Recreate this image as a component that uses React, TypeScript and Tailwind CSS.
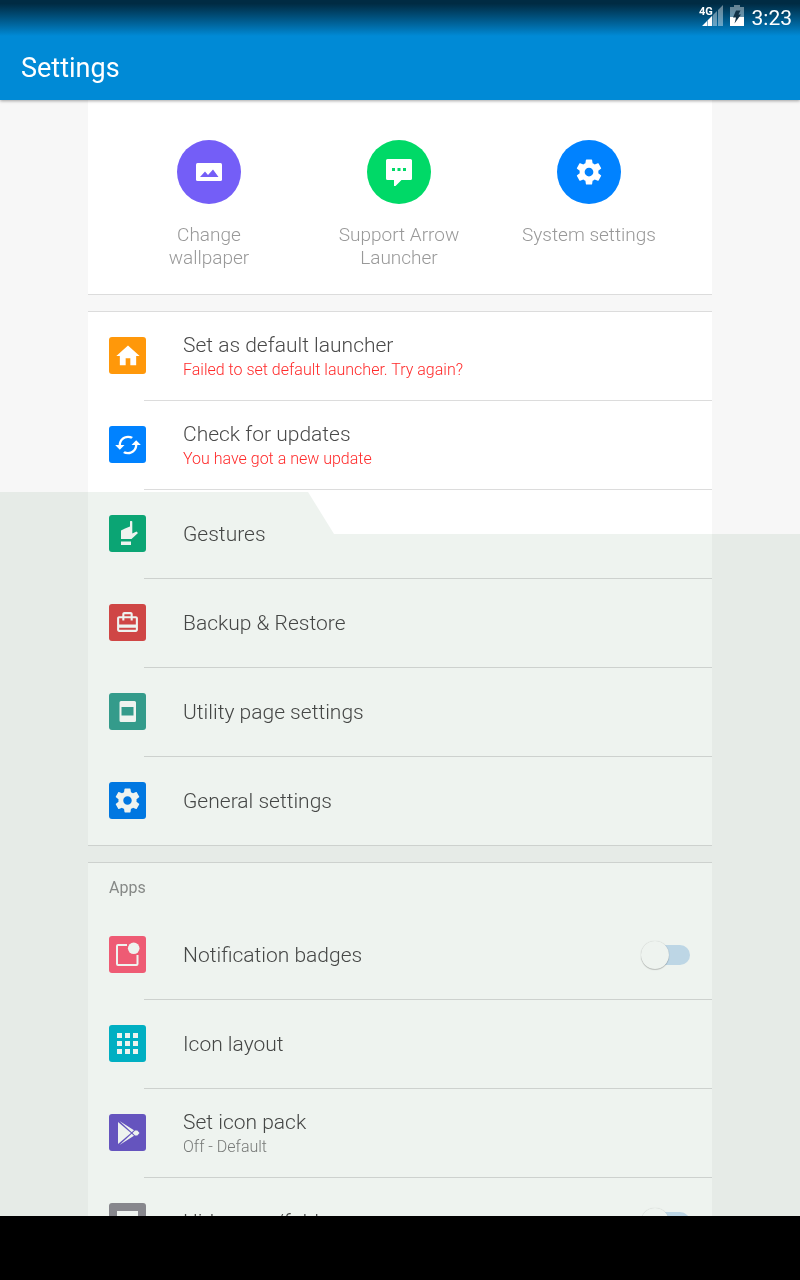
import type { ReactNode } from "react";
import { MdCached, MdCardTravel, MdHome } from "react-icons/md";

function Gear({ className }: { className: string }) {
  return (
    <svg viewBox="0 0 24 24" className={className} fill="currentColor" aria-hidden="true">
      <path d="M19.43 12.98c.04-.32.07-.64.07-.98s-.03-.66-.07-.98l2.11-1.65c.19-.15.24-.42.12-.64l-2-3.46c-.12-.22-.39-.3-.61-.22l-2.49 1c-.52-.4-1.08-.73-1.69-.98l-.38-2.65C14.46 2.18 14.25 2 14 2h-4c-.25 0-.46.18-.49.42l-.38 2.65c-.61.25-1.17.59-1.69.98l-2.49-1c-.23-.09-.49 0-.61.22l-2 3.46c-.13.22-.07.49.12.64l2.11 1.65c-.04.32-.07.65-.07.98s.03.66.07.98l-2.11 1.65c-.19.15-.24.42-.12.64l2 3.46c.12.22.39.3.61.22l2.49-1c.52.4 1.08.73 1.69.98l.38 2.65c.03.24.24.42.49.42h4c.25 0 .46-.18.49-.42l.38-2.65c.61-.25 1.17-.59 1.69-.98l2.49 1c.23.09.49 0 .61-.22l2-3.46c.12-.22.07-.49-.12-.64l-2.11-1.65zM12 15.5c-1.93 0-3.5-1.57-3.5-3.5s1.57-3.5 3.5-3.5 3.5 1.57 3.5 3.5-1.57 3.5-3.5 3.5z" />
    </svg>
  );
}

function Glyph({ children }: { children: ReactNode }) {
  return (
    <svg viewBox="0 0 37 37" className="size-full" fill="currentColor" aria-hidden="true">
      {children}
    </svg>
  );
}

function StatusBar() {
  return (
    <div className="flex h-9 items-start justify-end bg-linear-to-b from-[#002b43] from-10% to-[#008ad6] pt-[5px] pr-2 text-white">
      <svg viewBox="0 0 24 22" className="mr-1.5 h-[22px] w-6 overflow-visible" aria-hidden="true">
        <path d="M13 10l4-4v15h-4zM18 5l5-5v21h-5z" fill="#fff" fillOpacity=".4" />
        <path d="M2 21l5-5v5zM7.500 15.500l4.700-4.700V21H7.500z" fill="#fff" />
        <text x="-1" y="10" fontSize="11" fontWeight="700" fill="#fff">
          4G
        </text>
      </svg>
      <svg viewBox="0 0 14 22" className="mr-2 h-[22px] w-[14px]" aria-hidden="true">
        <path d="M4 0h6v2h4v10H0V2h4z" fill="#fff" fillOpacity=".4" />
        <path d="M0 12h14v9H0z" fill="#fff" />
        <path d="M6 5.500h4.500L8.500 9.500H11L4.500 18.500l1.500-6H3z" fill="#123247" />
      </svg>
      <span className="text-[21px] leading-[26px]">3:23</span>
    </div>
  );
}

function Shortcut({ label, color, children }: { label: string; color: string; children: ReactNode }) {
  return (
    <button type="button" className="flex flex-col items-center gap-[19px]">
      <span className={`flex size-16 items-center justify-center rounded-full text-white ${color}`}>{children}</span>
      <span className="max-w-[136px] text-[19px] leading-[23px] font-light text-[#999]">{label}</span>
    </button>
  );
}

type RowProps = {
  title: string;
  color: string;
  icon: ReactNode;
  note?: string;
  noteColor?: string;
  toggle?: boolean;
  last?: boolean;
};

function Row({ title, color, icon, note, noteColor = "text-[#808080]", toggle, last }: RowProps) {
  const body = (
    <>
      <span className={`flex size-[37px] shrink-0 items-center justify-center rounded-[3px] text-white ${color}`}>{icon}</span>
      <span className="flex grow flex-col">
        <span className="text-[21px] leading-7 font-light text-[#4a4a4a]">{title}</span>
        {note && <span className={`text-base leading-[22px] font-light ${noteColor}`}>{note}</span>}
      </span>
    </>
  );
  const rowClass = "flex h-[88px] w-full items-center gap-[37px] pr-[22px] pb-px pl-[21px] text-left";
  return (
    <li>
      {toggle ? (
        <label className={rowClass}>
          {body}
          <input
            type="checkbox"
            className="grid h-7 w-[49px] shrink-0 appearance-none items-center before:col-start-1 before:row-start-1 before:h-5 before:w-10 before:justify-self-end before:rounded-full before:bg-[#cbe1f5] after:col-start-1 after:row-start-1 after:size-7 after:justify-self-start after:rounded-full after:bg-white after:shadow-[0_1px_1px_rgba(0,0,0,0.2),0_0_1px_rgba(0,0,0,0.2)] checked:before:bg-[#0088d2] checked:after:justify-self-end"
          />
        </label>
      ) : (
        <button type="button" className={rowClass}>
          {body}
        </button>
      )}
      {!last && <div className="ml-14 h-px bg-[#dcdcdc]" />}
    </li>
  );
}

export default function App() {
  return (
    <div className="flex h-screen flex-col bg-[#f7f7f7] font-[Roboto,sans-serif]">
      <header className="relative z-10 bg-[#008ad6] shadow-[0_1px_3px_rgba(0,0,0,0.35)]">
        <StatusBar />
        <h1 className="px-[21px] text-[27px] leading-[64px] text-white">Settings</h1>
      </header>

      <main className="relative min-h-0 grow overflow-y-auto [scrollbar-width:none]">
        <div className="mx-[11%] flex flex-col gap-4">
          <section className="grid grid-cols-3 items-start border-b border-[#dcdcdc] bg-white pt-10 pr-7 pb-[25px] pl-[26px]">
            <Shortcut label="Change wallpaper" color="bg-[#745ef7]">
              <svg viewBox="0 0 26 18" className="h-[18px] w-[26px]" aria-hidden="true">
                <rect width="26" height="18" rx="1.500" fill="#fff" />
                <path d="M4 14l5-5.500 3 3.500 5-5.500 5.500 7.500z" fill="#745ef7" />
              </svg>
            </Shortcut>
            <Shortcut label="Support Arrow Launcher" color="bg-[#00d967]">
              <svg viewBox="0 0 26 27" className="h-[27px] w-[26px]" aria-hidden="true">
                <path d="M1.500 0h23Q26 0 26 1.500v18q0 1.500-1.500 1.500H15.500l-6 6H8v-6H1.500Q0 21 0 19.500v-18Q0 0 1.500 0z" fill="#fff" />
                <path d="M6 9h3v3H6zM11.500 9h3v3h-3zM17 9h3v3h-3z" fill="#00d967" />
              </svg>
            </Shortcut>
            <Shortcut label="System settings" color="bg-[#0082ff]">
              <Gear className="size-[30px]" />
            </Shortcut>
          </section>

          <ul className="border-y border-[#dcdcdc] bg-white">
            <Row
              title="Set as default launcher"
              note="Failed to set default launcher. Try again?"
              noteColor="text-[#ff2a2a]"
              color="bg-[#ff980a]"
              icon={<MdHome className="size-7" />}
            />
            <Row
              title="Check for updates"
              note="You have got a new update"
              noteColor="text-[#ff2a2a]"
              color="bg-[#0082ff]"
              icon={<MdCached className="size-7" />}
            />
            <Row
              title="Gestures"
              color="bg-[#0bad7c]"
              icon={
                <Glyph>
                  <path d="M21 6.500q0-.5.5-.5h1q.8 0 .8.8V18.500l4.200-2 1.500 1.500-6.500 6H12v-8.500l4-2 5-2zM12 26.500h10v3.500H12z" />
                </Glyph>
              }
            />
            <Row title="Backup & Restore" color="bg-[#de4949]" icon={<MdCardTravel className="size-[25px]" />} />
            <Row
              title="Utility page settings"
              color="bg-[#37a394]"
              icon={
                <Glyph>
                  <path fillRule="evenodd" d="M12 8h13.500q1.500 0 1.500 1.500v18q0 1.500-1.500 1.500H12q-1.500 0-1.500-1.500v-18Q10.500 8 12 8zM12.500 14v8.500h12V14z" />
                </Glyph>
              }
            />
            <Row title="General settings" color="bg-[#007df1]" icon={<Gear className="size-[29px]" />} last />
          </ul>

          <section className="border-t border-[#dcdcdc] bg-white">
            <h2 className="px-[21px] pt-0.5 text-base leading-[46px] text-[#909090]">Apps</h2>
            <ul>
              <Row
                title="Notification badges"
                color="bg-[#ff5f7c]"
                toggle
                icon={
                  <Glyph>
                    <path d="M18 9H9q-1 0-1 1v18q0 1 1 1h18.500q1 0 1-1v-9" fill="none" stroke="currentColor" strokeWidth="2" />
                    <circle cx="24.700" cy="12.300" r="5.800" />
                  </Glyph>
                }
              />
              <Row
                title="Icon layout"
                color="bg-[#00b8cf]"
                icon={
                  <Glyph>
                    <path d="M8 8h5v5H8zM16 8h5v5h-5zM24 8h5v5h-5zM8 16h5v5H8zM16 16h5v5h-5zM24 16h5v5h-5zM8 24h5v5H8zM16 24h5v5h-5zM24 24h5v5h-5z" />
                  </Glyph>
                }
              />
              <Row
                title="Set icon pack"
                note="Off - Default"
                color="bg-[#6c58cb]"
                icon={
                  <Glyph>
                    <path d="M9 8v22L22 19z" />
                    <path d="M10.500 7l14.500 9.300-2.300 2zM10.500 31l12.200-11.300 2.300 2z" />
                    <path d="M26 16.500h2.300L30.500 19l-2.200 2.500H26L23.500 19z" />
                  </Glyph>
                }
              />
              <Row
                title="Hide apps/folders"
                color="bg-[#918e96]"
                toggle
                last
                icon={
                  <Glyph>
                    <path d="M8 8h21v21H8z" />
                  </Glyph>
                }
              />
            </ul>
          </section>
        </div>

        <div className="pointer-events-none absolute inset-x-0 top-[392px] bottom-0 bg-[#eef3ef] mix-blend-multiply [clip-path:polygon(0_0,308px_0,334px_42px,100%_42px,100%_100%,0_100%)]" />
      </main>

      <footer className="h-16 shrink-0 bg-black" />
    </div>
  );
}
